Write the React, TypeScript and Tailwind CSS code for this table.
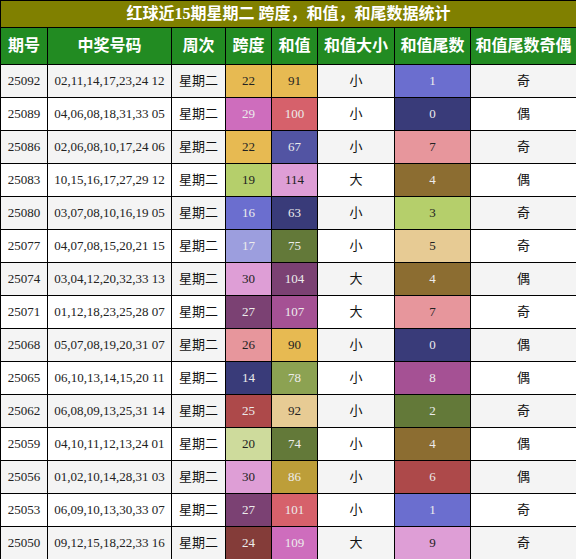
import React from 'react';

type Row = { qi: string; nums: string; span: number; sum: number; size: string; tail: number; odd: string };

const rows: Row[] = [
  { qi: '25092', nums: '02,11,14,17,23,24 12', span: 22, sum: 91, size: '小', tail: 1, odd: '奇' },
  { qi: '25089', nums: '04,06,08,18,31,33 05', span: 29, sum: 100, size: '小', tail: 0, odd: '偶' },
  { qi: '25086', nums: '02,06,08,10,17,24 06', span: 22, sum: 67, size: '小', tail: 7, odd: '奇' },
  { qi: '25083', nums: '10,15,16,17,27,29 12', span: 19, sum: 114, size: '大', tail: 4, odd: '偶' },
  { qi: '25080', nums: '03,07,08,10,16,19 05', span: 16, sum: 63, size: '小', tail: 3, odd: '奇' },
  { qi: '25077', nums: '04,07,08,15,20,21 15', span: 17, sum: 75, size: '小', tail: 5, odd: '奇' },
  { qi: '25074', nums: '03,04,12,20,32,33 13', span: 30, sum: 104, size: '大', tail: 4, odd: '偶' },
  { qi: '25071', nums: '01,12,18,23,25,28 07', span: 27, sum: 107, size: '大', tail: 7, odd: '奇' },
  { qi: '25068', nums: '05,07,08,19,20,31 07', span: 26, sum: 90, size: '小', tail: 0, odd: '偶' },
  { qi: '25065', nums: '06,10,13,14,15,20 11', span: 14, sum: 78, size: '小', tail: 8, odd: '偶' },
  { qi: '25062', nums: '06,08,09,13,25,31 14', span: 25, sum: 92, size: '小', tail: 2, odd: '奇' },
  { qi: '25059', nums: '04,10,11,12,13,24 01', span: 20, sum: 74, size: '小', tail: 4, odd: '偶' },
  { qi: '25056', nums: '01,02,10,14,28,31 03', span: 30, sum: 86, size: '小', tail: 6, odd: '偶' },
  { qi: '25053', nums: '06,09,10,13,30,33 07', span: 27, sum: 101, size: '小', tail: 1, odd: '奇' },
  { qi: '25050', nums: '09,12,15,18,22,33 16', span: 24, sum: 109, size: '大', tail: 9, odd: '奇' },
];

// value -> [background, text]
const palette: Record<number, [string, string]> = {
  22: ['#e7ba52', 'dark'], 91: ['#e7ba52', 'dark'], 90: ['#e7ba52', 'dark'],
  29: ['#ce6dbd', 'light'], 109: ['#ce6dbd', 'light'],
  100: ['#d6616b', 'light'], 101: ['#d6616b', 'light'],
  67: ['#5254a3', 'light'],
  19: ['#b5cf6b', 'dark'],
  114: ['#de9ed6', 'dark'], 30: ['#de9ed6', 'dark'],
  16: ['#6b6ecf', 'light'],
  63: ['#393b79', 'light'], 14: ['#393b79', 'light'],
  17: ['#9c9ede', 'light'],
  75: ['#637939', 'light'], 74: ['#637939', 'light'],
  104: ['#7b4173', 'light'], 27: ['#7b4173', 'light'],
  107: ['#a55194', 'light'],
  26: ['#e7969c', 'dark'],
  78: ['#8ca252', 'light'],
  25: ['#ad494a', 'light'],
  92: ['#e7cb94', 'dark'],
  20: ['#cedb9c', 'dark'],
  86: ['#bd9e39', 'light'],
  24: ['#843c39', 'light'],
};

const tailPalette: Record<number, [string, string]> = {
  0: ['#393b79', 'light'],
  1: ['#6b6ecf', 'light'],
  2: ['#637939', 'light'],
  3: ['#b5cf6b', 'dark'],
  4: ['#8c6d31', 'light'],
  5: ['#e7cb94', 'dark'],
  6: ['#ad494a', 'light'],
  7: ['#e7969c', 'dark'],
  8: ['#a55194', 'light'],
  9: ['#de9ed6', 'dark'],
};

const ColorCell: React.FC<{ value: number; c: [string, string] }> = ({ value, c }) => (
  <td
    className={`border border-black text-center ${c[1] === 'light' ? 'text-[#ececec]' : 'text-[#222]'}`}
    style={{ backgroundColor: c[0] }}
  >
    {value}
  </td>
);

const headers = ['期号', '中奖号码', '周次', '跨度', '和值', '和值大小', '和值尾数', '和值尾数奇偶'];

export default function App() {
  return (
    <div className="w-[576px] h-[559px] overflow-hidden bg-white" style={{ fontFamily: '"Liberation Serif", "Noto Sans CJK SC", serif' }}>
      <table className="w-[576px] table-fixed border-collapse text-[13px]">
        <colgroup>
          <col className="w-[47px]" />
          <col className="w-[124px]" />
          <col className="w-[54px]" />
          <col className="w-[46px]" />
          <col className="w-[46px]" />
          <col className="w-[77px]" />
          <col className="w-[76px]" />
          <col className="w-[106px]" />
        </colgroup>
        <thead>
          <tr className="h-[27px]">
            <th colSpan={8} className="border border-black bg-[#808000] text-white text-[16px] font-bold leading-none">
              红球近15期星期二 跨度，和值，和尾数据统计
            </th>
          </tr>
          <tr className="h-[37px]">
            {headers.map((h) => (
              <th key={h} className="border border-black bg-[#228b22] text-white text-[16px] font-bold leading-none">
                {h}
              </th>
            ))}
          </tr>
        </thead>
        <tbody>
          {rows.map((r, i) => (
            <tr key={r.qi} className={`h-[33px] ${i % 2 === 0 ? 'bg-[#f4f4f4]' : 'bg-white'}`}>
              <td className="border border-black text-center text-[#222]">{r.qi}</td>
              <td className="border border-black text-center text-[#222]">{r.nums}</td>
              <td className="border border-black text-center text-[#111]">星期二</td>
              <ColorCell value={r.span} c={palette[r.span]} />
              <ColorCell value={r.sum} c={palette[r.sum]} />
              <td className="border border-black text-center text-[#111]">{r.size}</td>
              <ColorCell value={r.tail} c={tailPalette[r.tail]} />
              <td className="border border-black text-center text-[#111]">{r.odd}</td>
            </tr>
          ))}
        </tbody>
      </table>
    </div>
  );
}
